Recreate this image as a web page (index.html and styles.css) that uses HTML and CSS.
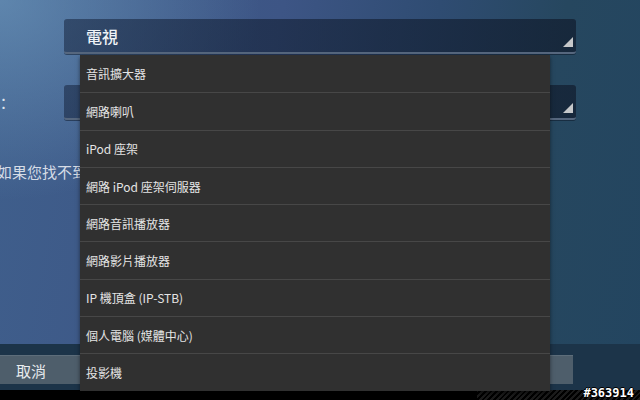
FILE: index.html
```html
<!DOCTYPE html>
<html lang="zh-Hant">
<head>
  <meta charset="UTF-8" />
  <title>裝置類型</title>
  <link rel="stylesheet" href="styles.css">
</head>
<body>
  <div class="screen">
    <div class="form">
      <div class="row">
        <div class="label"></div>
        <div class="select">
          <span class="value">電視</span>
          <svg class="corner" width="10" height="10" viewBox="0 0 10 10"><polygon points="10,0 10,10 0,10" /></svg>
        </div>
      </div>
      <div class="row">
        <div class="label">：</div>
        <div class="select">
          <span class="value"></span>
          <svg class="corner" width="10" height="10" viewBox="0 0 10 10"><polygon points="10,0 10,10 0,10" /></svg>
        </div>
      </div>
      <p class="hint">如果您找不到裝置類型，請選擇最接近的項目。</p>
    </div>

    <div class="actions">
      <button class="btn cancel">取消</button>
      <button class="btn ok">確定</button>
    </div>
    <div class="navbar"></div>

    <!-- open dropdown of the first select -->
    <ul class="dropdown">
      <li>音訊擴大器</li>
      <li>網路喇叭</li>
      <li>iPod 座架</li>
      <li>網路 iPod 座架伺服器</li>
      <li>網路音訊播放器</li>
      <li>網路影片播放器</li>
      <li>IP 機頂盒 (IP-STB)</li>
      <li>個人電腦 (媒體中心)</li>
      <li>投影機</li>
    </ul>

    <div class="stamp">#363914</div>
  </div>
</body>
</html>
```

FILE: styles.css
```css
body {
  margin: 0;
  font-family: "Noto Sans CJK TC", "Noto Sans", sans-serif;
  background: #000;
}

.screen {
  position: relative;
  width: 640px;
  height: 400px;
  overflow: hidden;
  display: flex;
  flex-direction: column;
  background:
    radial-gradient(ellipse 260px 200px at 0 0, rgba(120, 165, 200, 0.55), transparent),
    linear-gradient(100deg, #3f5f8c 0%, #3d5585 40%, #2f4c72 62%, #26475f 80%, #234560 100%);
}

.form {
  flex: 1;
  padding-top: 19px;
}

.row {
  display: grid;
  grid-template-columns: 64px 512px;
  margin-bottom: 31px;
}

.label {
  color: #dfe5ee;
  font-size: 15px;
  line-height: 35px;
  margin-left: -4px;
}

.select {
  position: relative;
  height: 35px;
  box-sizing: border-box;
  border-radius: 3px;
  background: linear-gradient(to right, rgba(22, 36, 62, 0.55), rgba(18, 30, 48, 0.75));
  border-bottom: 2px solid #56677e;
  box-shadow: 0 1px 0 rgba(10, 20, 35, 0.5);
  display: flex;
  align-items: center;
}

.value {
  padding-left: 22px;
  color: #eef2f6;
  font-size: 16px;
  font-weight: 500;
}

.corner {
  position: absolute;
  right: 3px;
  bottom: 5px;
  fill: #c6c8ca;
}

.hint {
  margin: 0 0 0 -3px;
  padding-top: 10px;
  color: #d6dce6;
  font-size: 15px;
  white-space: nowrap;
}

.actions {
  height: 46px;
  box-sizing: border-box;
  padding-top: 11px;
  background: #1c3449;
  display: grid;
  grid-template-columns: 320px 243px;
  column-gap: 10px;
}

.btn {
  height: 29px;
  border: none;
  border-top: 1px solid #5d6d7a;
  background: #4e5e6b;
  color: #e8ecef;
  font-family: inherit;
  font-size: 15px;
  text-align: left;
  padding: 0 16px;
}

.navbar {
  height: 10px;
  background:
    repeating-linear-gradient(135deg, #1b1b1b 0 2px, #000 2px 4px) right / 163px 100% no-repeat,
    #000;
}

.dropdown {
  position: absolute;
  left: 80px;
  top: 55px;
  width: 470px;
  margin: 0;
  padding: 0;
  list-style: none;
  background: #303030;
  box-shadow: 0 2px 4px rgba(0, 0, 0, 0.5);
}

.dropdown li {
  height: 37.3px;
  box-sizing: border-box;
  padding-left: 6px;
  display: flex;
  align-items: center;
  color: #e4e4e4;
  font-size: 12px;
  border-top: 1px solid #474747;
}

.dropdown li:first-child {
  border-top: none;
}

.stamp {
  position: absolute;
  right: 6px;
  bottom: 0;
  font-family: "DejaVu Sans Mono", monospace;
  font-size: 12px;
  font-weight: bold;
  color: #fff;
  text-shadow: -1px 0 #000, 1px 0 #000, 0 -1px #000, 0 1px #000;
}
```
